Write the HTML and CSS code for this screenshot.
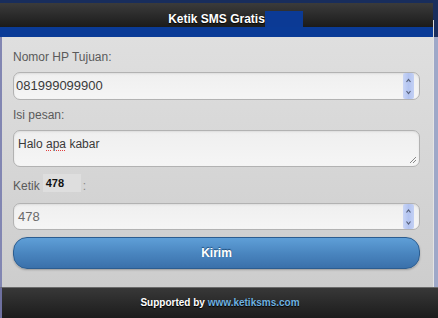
FILE: index.html
```html
<!DOCTYPE html>
<html>
<head>
<meta charset="utf-8">
<link rel="stylesheet" href="styles.css">
</head>
<body>
<div class="page">
  <div class="top">
    <div class="main">
      <div class="topline"></div>
      <div class="header">
        <h1 class="title">Ketik SMS Gratis<span class="sel"></span></h1>
      </div>
      <div class="band"></div>
      <div class="content">
        <label class="label">Nomor HP Tujuan:</label>
        <div class="field field-first">
          <span class="value">081999099900</span>
          <span class="spin">
            <svg width="11" height="26" viewBox="0 0 11 26"><path d="M3.5 9 L5.5 6.5 L7.5 9" fill="none" stroke="#56607a" stroke-width="1.2"/><path d="M3.5 18 L5.5 20.5 L7.5 18" fill="none" stroke="#56607a" stroke-width="1.2"/></svg>
          </span>
        </div>
        <label class="label label-gap">Isi pesan:</label>
        <div class="area">
          <span class="area-text">Halo <span class="typo">apa</span> kabar</span>
          <svg class="grip" width="8" height="8" viewBox="0 0 8 8"><path d="M7 1 L1 7 M7 4 L4 7" stroke="#888" stroke-width="1"/></svg>
        </div>
        <div class="captcha-row">
          <span class="label-inline">Ketik</span>
          <span class="captcha">478</span>
          <span class="colon">:</span>
        </div>
        <div class="field field-short">
          <span class="value value-muted">478</span>
          <span class="spin">
            <svg width="11" height="25" viewBox="0 0 11 25"><path d="M3.5 8.5 L5.5 6 L7.5 8.5" fill="none" stroke="#56607a" stroke-width="1.2"/><path d="M3.5 17.5 L5.5 20 L7.5 17.5" fill="none" stroke="#56607a" stroke-width="1.2"/></svg>
          </span>
        </div>
        <button class="btn" type="button">Kirim</button>
      </div>
    </div>
    <div class="rail">
      <div class="rail-top"></div>
      <div class="rail-mid"></div>
      <div class="rail-low"></div>
    </div>
  </div>
  <div class="footer">
    <span class="sup">Supported by</span> <span class="link">www.ketiksms.com</span>
  </div>
</div>
</body>
</html>
```
FILE: styles.css
```css
* { box-sizing: border-box; }
html, body { margin: 0; padding: 0; }
body {
  width: 438px;
  height: 318px;
  overflow: hidden;
  font-family: "Liberation Sans", Arial, sans-serif;
  background: #d4d4d4;
}
.page {
  display: flex;
  flex-direction: column;
  width: 438px;
  height: 318px;
}
.top {
  display: flex;
  height: 287px;
}
.main {
  width: 433px;
  display: flex;
  flex-direction: column;
}
.topline {
  height: 3px;
  background: #182d5c;
}
.header {
  height: 24px;
  padding-top: 8px;
  background: linear-gradient(#3b3b3b, #1b1b1b);
  display: flex;
  justify-content: center;
}
.title {
  position: relative;
  margin: 0;
  font-size: 12px;
  line-height: 16px;
  font-weight: bold;
  color: #fff;
  text-shadow: 0 1px 1px #000;
}
.sel {
  position: absolute;
  left: 100%;
  top: 0;
  width: 38px;
  height: 16px;
  background: #0b3a95;
}
.band {
  height: 10px;
  background: #0a3b97;
}
.content {
  flex: 1;
  border-left: 2px solid #8286b2;
  padding: 13px 13px 0 11px;
  background: linear-gradient(#dfdfdf, #cdcdcd);
  display: flex;
  flex-direction: column;
}
.label {
  font-size: 12px;
  line-height: 15px;
  color: #5a5a5a;
}
.label-gap { margin-top: 8px; }
.field {
  margin-top: 7px;
  height: 28px;
  border: 1px solid #b2b2b2;
  border-radius: 7px;
  background: linear-gradient(#efefef, #f5f5f5);
  box-shadow: inset 0 1px 2px rgba(0,0,0,0.08);
  display: flex;
  align-items: stretch;
  padding: 0 5px 0 4px;
}
.field-first { padding-left: 2px; }
.field-short { height: 27px; }
.value {
  flex: 1;
  font-size: 13px;
  line-height: 26px;
  color: #3a3a3a;
}
.field-short .value { line-height: 25px; }
.value-muted { color: #6a6a6a; }
.spin {
  width: 11px;
  background: linear-gradient(90deg, #c9d5f5, #b2c3f0 50%, #c3d0f4);
  border-radius: 2px;
  display: flex;
}
.area {
  margin-top: 7px;
  height: 37px;
  border: 1px solid #b2b2b2;
  border-radius: 7px;
  background: linear-gradient(#efefef, #f5f5f5);
  box-shadow: inset 0 1px 2px rgba(0,0,0,0.08);
  display: flex;
  padding: 6px 2px 2px 4px;
}
.area-text {
  flex: 1;
  font-size: 12px;
  line-height: 15px;
  color: #3a3a3a;
}
.typo {
  text-decoration: underline dotted #e04040;
  text-decoration-thickness: 1px;
  text-underline-offset: 2px;
}
.grip {
  align-self: flex-end;
}
.captcha-row {
  margin-top: 6px;
  display: flex;
  align-items: flex-end;
  height: 21px;
}
.label-inline {
  font-size: 12px;
  line-height: 15px;
  color: #5a5a5a;
}
.captcha {
  margin-left: 3px;
  margin-bottom: 2px;
  width: 38px;
  height: 18px;
  padding: 4px 0 0 3px;
  background: #dedede;
  font-size: 11px;
  line-height: 11px;
  font-weight: bold;
  color: #111;
}
.colon {
  margin-left: 2px;
  font-size: 12px;
  line-height: 15px;
  color: #888;
}
.captcha-row + .field { margin-top: 9px; }
.field + .btn { margin-top: 7px; }
.btn {
  height: 32px;
  border: 1px solid #2c5d90;
  border-radius: 14px;
  background: linear-gradient(#5f9fd7, #4a86c0 50%, #3a70aa);
  box-shadow: 0 1px 2px rgba(0,0,0,0.25);
  font-family: "Liberation Sans", Arial, sans-serif;
  font-size: 12px;
  font-weight: bold;
  color: #fff;
  text-shadow: 0 -1px 1px #1d4a78;
  padding: 0;
}
.rail {
  width: 5px;
  display: flex;
  flex-direction: column;
}
.rail-top {
  height: 20px;
  background: #1a2e5d;
}
.rail-mid {
  height: 17px;
  background: #1a2e5d;
  border-left: 1px solid #d8d8d8;
}
.rail-low {
  flex: 1;
  background: #9ea8c8;
  border-left: 1px solid #e4e4e4;
}
.footer {
  height: 31px;
  border-left: 2px solid #6e70a0;
  background: linear-gradient(#383838, #1c1c1c);
  border-top: 1px solid #6a6a6a;
  text-align: center;
  font-size: 10px;
  line-height: 30px;
  font-weight: bold;
  text-shadow: 0 1px 1px #000;
}
.sup { color: #fff; }
.link { color: #6fb2e0; }
```
